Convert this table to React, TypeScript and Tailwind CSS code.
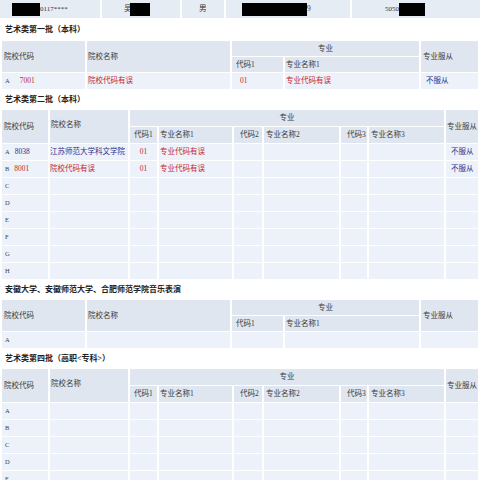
import React from "react";

type Row = {
  letter: string;
  code?: string;
  name?: string;
  bad?: boolean;
  majors?: { code: string; name: string }[];
  fu?: string;
};

const font = {
  fontFamily: '"Liberation Serif", "Noto Sans CJK SC", serif',
};

const hd = "bg-[#dfe6f0] text-[#3a3a3a] align-middle";
const td = "bg-[#edf2fa] align-middle h-[16px]";
const red = "text-[#c3262e]";
const blue = "text-[#2b2f8f]";

function Heading({ children, h }: { children: React.ReactNode; h: string }) {
  return (
    <div className={`${h} flex items-center pl-[5px] text-[8px] font-bold text-[#222]`}>
      {children}
    </div>
  );
}

// 一个志愿: 院校代码 / 院校名称 / 专业代码1 / 专业名称1 / 服从
function SingleTable({ rows, hh }: { rows: Row[]; hh: string }) {
  return (
    <table className="w-[480px] table-fixed border-separate border-spacing-x-[2px] border-spacing-y-[1px] text-[7.5px] leading-none">
      <colgroup>
        <col className="w-[83px]" />
        <col className="w-[143px]" />
        <col className="w-[51px]" />
        <col className="w-[134px]" />
        <col className="w-[57px]" />
      </colgroup>
      <thead>
        <tr>
          <th rowSpan={2} className={`${hd} pl-[2px] text-left font-normal`}>院校代码</th>
          <th rowSpan={2} className={`${hd} pl-[1px] text-left font-normal`}>院校名称</th>
          <th colSpan={2} className={`${hd} ${hh} text-center font-normal`}>专业</th>
          <th rowSpan={2} className={`${hd} pl-[2px] text-left font-normal`}>专业服从</th>
        </tr>
        <tr>
          <th className={`${hd} ${hh} pl-[4px] text-left font-normal`}>代码1</th>
          <th className={`${hd} ${hh} pl-[1px] text-left font-normal`}>专业名称1</th>
        </tr>
      </thead>
      <tbody>
        {rows.map((r) => (
          <tr key={r.letter}>
            <td className={`${td} pl-[3px] text-[#444]`}>
              <span className="text-[6.5px]">{r.letter}</span>
              {r.code && <span className={`${red} ml-[10px]`}>{r.code}</span>}
            </td>
            <td className={`${td} pl-[1px] ${red}`}>{r.name}</td>
            <td className={`${td} pl-[8px] ${red}`}>{r.majors?.[0]?.code}</td>
            <td className={`${td} pl-[1px] ${red}`}>{r.majors?.[0]?.name}</td>
            <td className={`${td} pl-[5px] ${blue}`}>{r.fu}</td>
          </tr>
        ))}
      </tbody>
    </table>
  );
}

// 三个专业的表
function TripleTable({ rows }: { rows: Row[] }) {
  const sub = ["1", "2", "3"];
  return (
    <table className="w-[480px] table-fixed border-separate border-spacing-x-[2px] border-spacing-y-[1px] text-[7.5px] leading-none">
      <colgroup>
        <col className="w-[46px]" />
        <col className="w-[78px]" />
        <col className="w-[27px]" />
        <col className="w-[73px]" />
        <col className="w-[28px]" />
        <col className="w-[75px]" />
        <col className="w-[26px]" />
        <col className="w-[75px]" />
        <col className="w-[32px]" />
      </colgroup>
      <thead>
        <tr>
          <th rowSpan={2} className={`${hd} pl-[2px] text-left font-normal`}>院校代码</th>
          <th rowSpan={2} className={`${hd} pb-[3px] pl-[1px] text-left font-normal`}>院校名称</th>
          <th colSpan={6} className={`${hd} h-[16px] text-center font-normal`}>专业</th>
          <th rowSpan={2} className={`${hd} pl-[1px] text-left font-normal`}>专业服从</th>
        </tr>
        <tr>
          {sub.map((s, i) => (
            <React.Fragment key={s}>
              <th className={`${hd} h-[16px] ${i === 0 ? "pl-[4px]" : "pl-[6px]"} text-left font-normal whitespace-nowrap`}>
                代码{s}
              </th>
              <th className={`${hd} h-[16px] ${i === 0 ? "pl-[1px]" : "pl-[2px]"} text-left font-normal`}>
                专业名称{s}
              </th>
            </React.Fragment>
          ))}
        </tr>
      </thead>
      <tbody>
        {rows.map((r) => {
          const c = r.bad ? red : blue;
          return (
            <tr key={r.letter}>
              <td className={`${td} pl-[3px] text-[#444]`}>
                <span className="text-[6.5px]">{r.letter}</span>
                {r.code && <span className={`${c} ml-[5px]`}>{r.code}</span>}
              </td>
              <td className={`${td} ${c}`}>{r.name}</td>
              {sub.map((s, i) => (
                <React.Fragment key={s}>
                  <td className={`${td} text-center ${red}`}>{r.majors?.[i]?.code}</td>
                  <td className={`${td} pl-[1px] ${red}`}>{r.majors?.[i]?.name}</td>
                </React.Fragment>
              ))}
              <td className={`${td} pl-[5px] ${blue}`}>{r.fu}</td>
            </tr>
          );
        })}
      </tbody>
    </table>
  );
}

const letters = ["A", "B", "C", "D", "E", "F", "G", "H"];

function Black({ w }: { w: string }) {
  return <span className={`inline-block h-[13px] ${w} bg-black align-middle`} />;
}

export default function App() {
  const batch2: Row[] = letters.map((l) => ({ letter: l }));
  batch2[0] = {
    letter: "A",
    code: "8038",
    name: "江苏师范大学科文学院",
    majors: [{ code: "01", name: "专业代码有误" }],
    fu: "不服从",
  };
  batch2[1] = {
    letter: "B",
    code: "8001",
    name: "院校代码有误",
    bad: true,
    majors: [{ code: "01", name: "专业代码有误" }],
    fu: "不服从",
  };

  return (
    <div className="w-[480px] overflow-hidden bg-white" style={font}>
      <div className="flex h-[18px] gap-[2px] text-[7.5px] text-[#333]">
        <div className="flex w-[100px] items-center bg-[#e6ecf4] pl-[12px]">
          <Black w="w-[28px]" />
          <span className="text-[7px]">0117****</span>
        </div>
        <div className="flex w-[78px] items-center bg-[#e6ecf4] pl-[22px]">
          <span className="w-[6px] overflow-hidden">吴</span>
          <Black w="w-[20px]" />
        </div>
        <div className="flex w-[42px] items-center bg-[#e6ecf4] pl-[17px]">男</div>
        <div className="flex w-[124px] items-center bg-[#e6ecf4] pl-[16px]">
          <Black w="w-[65px]" />
          <span>9</span>
        </div>
        <div className="flex flex-1 items-center bg-[#e6ecf4] pl-[33px]">
          <span className="text-[7px]">5050</span>
          <Black w="w-[26px]" />
        </div>
      </div>

      <Heading h="h-[22px] pt-[1px]">艺术类第一批（本科）</Heading>
      <SingleTable
        hh="h-[15px]"
        rows={[
          {
            letter: "A",
            code: "7001",
            name: "院校代码有误",
            majors: [{ code: "01", name: "专业代码有误" }],
            fu: "不服从",
          },
        ]}
      />

      <Heading h="h-[19px]">艺术类第二批（本科）</Heading>
      <TripleTable rows={batch2} />

      <Heading h="h-[19px] pt-[1px]">安徽大学、安徽师范大学、合肥师范学院音乐表演</Heading>
      <SingleTable hh="h-[15px]" rows={[{ letter: "A" }]} />

      <Heading h="h-[19px]">艺术类第四批（高职&lt;专科&gt;）</Heading>
      <TripleTable rows={letters.map((l) => ({ letter: l }))} />
    </div>
  );
}
